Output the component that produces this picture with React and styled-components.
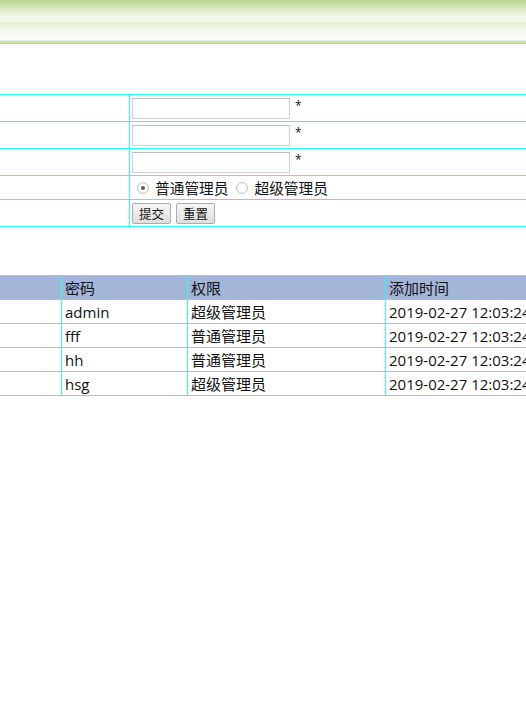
import React from 'react';
import styled, { createGlobalStyle } from 'styled-components';

const GlobalStyle = createGlobalStyle`
  html, body {
    margin: 0;
    padding: 0;
    background: #fff;
    overflow: hidden;
  }
  body {
    font-family: "Open Sans", "Noto Sans CJK SC", sans-serif;
    font-size: 15px;
    color: #111;
  }
`;

const Page = styled.div`
  width: 526px;
  overflow: hidden;
`;

const Banner = styled.div`
  height: 40px;
  background:
    linear-gradient(to bottom, #b9d78f 0px, #d8e8c0 8px, #eef5e4 16px, #f3f8ec 22px, transparent 22px),
    linear-gradient(to bottom, #e3efd3 22px, #f2f7ea 30px, #fbfdf8 40px);
  border-bottom: 1px solid #e6e8e2;
`;

const BannerEdge = styled.div`
  height: 3px;
  background: linear-gradient(to bottom, #d4e6b4, #bcd98e);
`;

const line = '#22ffff';

const Grid = styled.table`
  border-collapse: separate;
  border-spacing: 0;
  table-layout: fixed;
  width: ${(p) => p.width}px;
  margin-top: ${(p) => p.top}px;
  border-top: 1px solid ${line};
  td, th {
    box-sizing: border-box;
    border: 0;
    box-shadow: inset -1px -1px 0 ${line};
    padding: 0 4px 1px 3px;
    line-height: 20px;
    text-align: left;
    font-weight: normal;
    white-space: nowrap;
    overflow: hidden;
  }
`;

const FormRow = styled.tr`
  height: ${(p) => p.h}px;
`;

const Inline = styled.div`
  display: flex;
  align-items: center;
  gap: ${(p) => p.gap || 0}px;
  margin-left: -1px;
`;

const TextInput = styled.input`
  box-sizing: border-box;
  width: 158px;
  height: 21px;
  border: 1px solid #cfcfcf;
  border-top-color: #bdbdbd;
  padding: 0 2px;
  margin: 0;
  background: #fff;
`;

const Star = styled.span`
  font-size: 12px;
  line-height: 14px;
  margin-left: 5px;
  align-self: flex-start;
  margin-top: 1px;
`;

const Radio = styled.span`
  box-sizing: border-box;
  width: 12px;
  height: 12px;
  border-radius: 50%;
  border: 1px solid #c4c4c4;
  background: radial-gradient(circle, #fff 40%, #e6e6e6 100%);
  display: inline-flex;
  align-items: center;
  justify-content: center;
  margin: 0 6px 0 5px;
  &::after {
    content: '';
    width: 4px;
    height: 4px;
    border-radius: 50%;
    background: ${(p) => (p.checked ? '#5a5a5a' : 'transparent')};
  }
`;

const RadioLabel = styled.label`
  display: inline-flex;
  align-items: center;
  font-size: 14.7px;
  margin-right: 3px;
`;

const Button = styled.button`
  box-sizing: border-box;
  width: 39px;
  height: 21px;
  padding: 0;
  font-family: "Noto Sans CJK SC", sans-serif;
  font-size: 12.5px;
  color: #111;
  border: 1px solid #adadad;
  border-radius: 2px;
  background: linear-gradient(to bottom, #f6f6f6, #dedede);
`;

const HeadRow = styled.tr`
  height: 24px;
  background: #a4b6d8;
`;

const BodyRow = styled.tr`
  height: 24px;
`;

const users = [
  { pwd: 'admin', role: '超级管理员', time: '2019-02-27 12:03:24' },
  { pwd: 'fff', role: '普通管理员', time: '2019-02-27 12:03:24' },
  { pwd: 'hh', role: '普通管理员', time: '2019-02-27 12:03:24' },
  { pwd: 'hsg', role: '超级管理员', time: '2019-02-27 12:03:24' },
];

function App() {
  return (
    <Page>
      <GlobalStyle />
      <Banner />
      <BannerEdge />

      <Grid width={560} top={50}>
        <colgroup>
          <col style={{ width: 130 }} />
          <col />
        </colgroup>
        <tbody>
          {[0, 1, 2].map((i) => (
            <FormRow h={27} key={i}>
              <td />
              <td>
                <Inline>
                  <TextInput type="text" />
                  <Star>*</Star>
                </Inline>
              </td>
            </FormRow>
          ))}
          <FormRow h={24}>
            <td />
            <td>
              <Inline>
                <RadioLabel><Radio checked />普通管理员</RadioLabel>
                <RadioLabel><Radio />超级管理员</RadioLabel>
              </Inline>
            </td>
          </FormRow>
          <FormRow h={27}>
            <td />
            <td>
              <Inline gap={5}>
                <Button>提交</Button>
                <Button>重置</Button>
              </Inline>
            </td>
          </FormRow>
        </tbody>
      </Grid>

      <Grid width={600} top={48}>
        <colgroup>
          <col style={{ width: 62 }} />
          <col style={{ width: 126 }} />
          <col style={{ width: 198 }} />
          <col />
        </colgroup>
        <thead>
          <HeadRow>
            <th />
            <th>密码</th>
            <th>权限</th>
            <th>添加时间</th>
          </HeadRow>
        </thead>
        <tbody>
          {users.map((u) => (
            <BodyRow key={u.pwd}>
              <td />
              <td>{u.pwd}</td>
              <td>{u.role}</td>
              <td>{u.time}</td>
            </BodyRow>
          ))}
        </tbody>
      </Grid>
    </Page>
  );
}

export default App;
